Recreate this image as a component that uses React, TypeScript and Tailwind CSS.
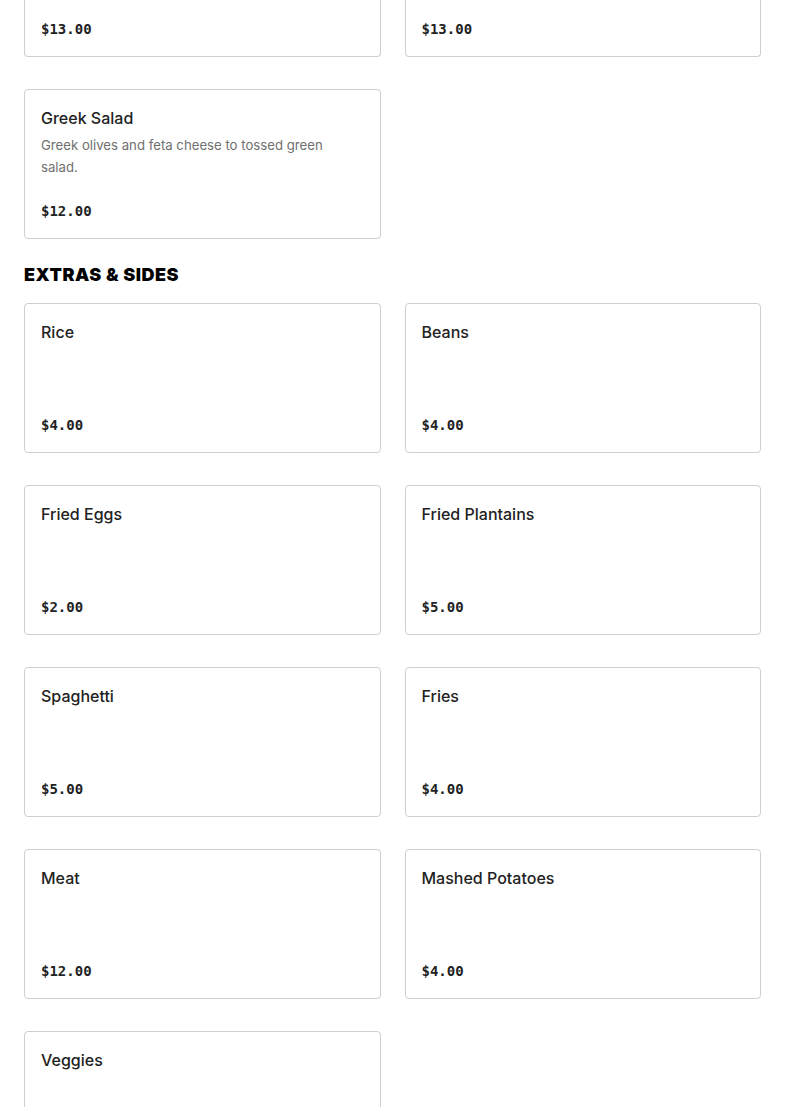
type Item = { name: string; price: string; desc?: string }

const salads: Item[] = [
  { name: "Greek Salad", desc: "Greek olives and feta cheese to tossed green salad.", price: "$12.00" },
]

const extras: Item[] = [
  { name: "Rice", price: "$4.00" },
  { name: "Beans", price: "$4.00" },
  { name: "Fried Eggs", price: "$2.00" },
  { name: "Fried Plantains", price: "$5.00" },
  { name: "Spaghetti", price: "$5.00" },
  { name: "Fries", price: "$4.00" },
  { name: "Meat", price: "$12.00" },
  { name: "Mashed Potatoes", price: "$4.00" },
  { name: "Veggies", price: "$4.00" },
]

function Price({ value }: { value: string }) {
  return (
    <p className="font-['DejaVu_Sans_Mono',monospace] text-[14px] font-bold leading-[22px] text-[#222]">
      {value}
    </p>
  )
}

function MenuCard({ item }: { item: Item }) {
  return (
    <div className="flex h-[150px] flex-col justify-between rounded border border-[#cfcfcf] bg-white p-4">
      <div>
        <h3 className="text-[16px] font-medium leading-6 text-[#222]">{item.name}</h3>
        {item.desc && (
          <p className="mt-1 pr-10 text-[13.2px] leading-[22px] text-[#707070]">{item.desc}</p>
        )}
      </div>
      <Price value={item.price} />
    </div>
  )
}

export default function App() {
  return (
    <main className="min-h-screen bg-white px-6 font-['Inter',sans-serif]">
      {/* previous row, scrolled mostly out of view */}
      <div className="grid grid-cols-2 gap-6">
        <div className="rounded-b border-x border-b border-[#cfcfcf] px-4 pb-4 pt-[18px]">
          <Price value="$13.00" />
        </div>
        <div className="rounded-b border-x border-b border-[#cfcfcf] px-4 pb-4 pt-[18px]">
          <Price value="$13.00" />
        </div>
      </div>

      <div className="mt-8 grid grid-cols-2 gap-x-6 gap-y-8">
        {salads.map((item) => (
          <MenuCard key={item.name} item={item} />
        ))}
      </div>

      <h2 className="mb-4 mt-6 text-[18px] font-black uppercase leading-6 tracking-[0.03em] text-black">
        Extras &amp; Sides
      </h2>

      <div className="grid grid-cols-2 gap-x-6 gap-y-8 pb-10">
        {extras.map((item) => (
          <MenuCard key={item.name} item={item} />
        ))}
      </div>
    </main>
  )
}
